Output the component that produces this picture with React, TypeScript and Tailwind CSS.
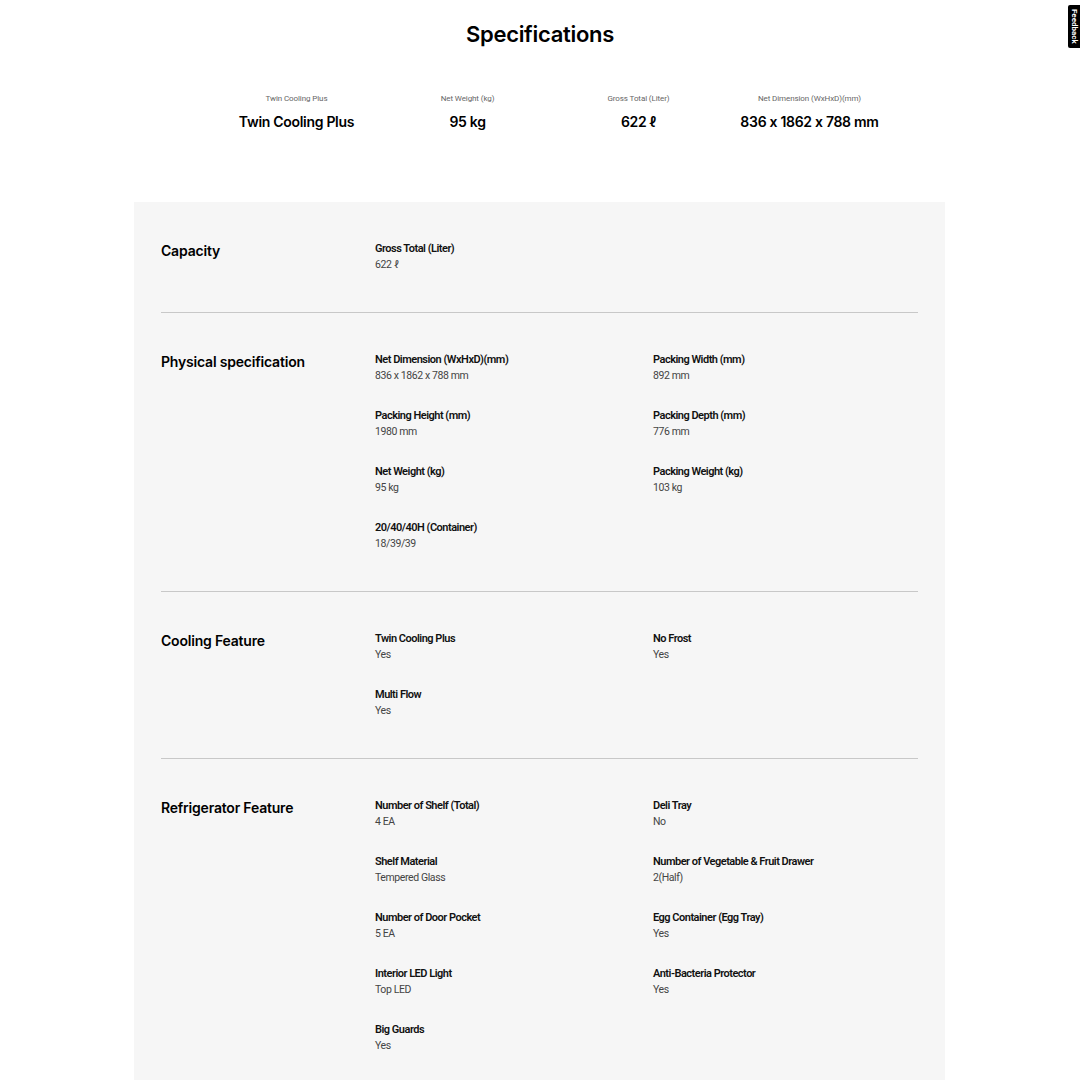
import React from 'react';

type Spec = { label: string; value: string };
type Section = { title: string; items: Spec[] };

const summary: Spec[] = [
  { label: 'Twin Cooling Plus', value: 'Twin Cooling Plus' },
  { label: 'Net Weight (kg)', value: '95 kg' },
  { label: 'Gross Total (Liter)', value: '622 ℓ' },
  { label: 'Net Dimension (WxHxD)(mm)', value: '836 x 1862 x 788 mm' },
];

const sections: Section[] = [
  {
    title: 'Capacity',
    items: [{ label: 'Gross Total (Liter)', value: '622 ℓ' }],
  },
  {
    title: 'Physical specification',
    items: [
      { label: 'Net Dimension (WxHxD)(mm)', value: '836 x 1862 x 788 mm' },
      { label: 'Packing Width (mm)', value: '892 mm' },
      { label: 'Packing Height (mm)', value: '1980 mm' },
      { label: 'Packing Depth (mm)', value: '776 mm' },
      { label: 'Net Weight (kg)', value: '95 kg' },
      { label: 'Packing Weight (kg)', value: '103 kg' },
      { label: '20/40/40H (Container)', value: '18/39/39' },
    ],
  },
  {
    title: 'Cooling Feature',
    items: [
      { label: 'Twin Cooling Plus', value: 'Yes' },
      { label: 'No Frost', value: 'Yes' },
      { label: 'Multi Flow', value: 'Yes' },
    ],
  },
  {
    title: 'Refrigerator Feature',
    items: [
      { label: 'Number of Shelf (Total)', value: '4 EA' },
      { label: 'Deli Tray', value: 'No' },
      { label: 'Shelf Material', value: 'Tempered Glass' },
      { label: 'Number of Vegetable & Fruit Drawer', value: '2(Half)' },
      { label: 'Number of Door Pocket', value: '5 EA' },
      { label: 'Egg Container (Egg Tray)', value: 'Yes' },
      { label: 'Interior LED Light', value: 'Top LED' },
      { label: 'Anti-Bacteria Protector', value: 'Yes' },
      { label: 'Big Guards', value: 'Yes' },
    ],
  },
];

const App: React.FC = () => {
  return (
    <div className="relative min-h-screen bg-white text-black font-['Roboto',sans-serif]">
      {/* Feedback tab */}
      <div className="absolute right-0 top-[5px] w-[12px] h-[43px] bg-black text-white flex items-center justify-center rounded-l-[2px]">
        <span className="[writing-mode:vertical-rl] text-[8px] font-bold leading-none">Feedback</span>
      </div>

      <h1 className="pt-[19px] text-center text-[22px] font-semibold tracking-[-0.3px] leading-[30px] font-['Inter',sans-serif]">
        Specifications
      </h1>

      {/* Summary */}
      <div className="ml-[211px] mt-[44px] w-[684px] grid grid-cols-4">
        {summary.map((s) => (
          <div key={s.label} className="flex flex-col items-center">
            <span className="text-[8px] leading-[12px] text-[#666] tracking-[-0.1px]">{s.label}</span>
            <span className="mt-[8px] text-[14px] leading-[18px] font-semibold font-['Inter',sans-serif] tracking-[-0.3px]">
              {s.value}
            </span>
          </div>
        ))}
      </div>

      {/* Spec panel */}
      <div className="ml-[134px] mt-[71px] w-[811px] bg-[#f6f6f6] px-[27px]">
        {sections.map((sec, i) => (
          <div
            key={sec.title}
            className={`flex py-[39px] ${i < sections.length - 1 ? 'border-b border-[#c8c8c8]' : ''}`}
          >
            <div className="w-[214px] shrink-0 pt-[1px]">
              <h2 className="text-[14px] leading-[18px] font-semibold font-['Inter',sans-serif] tracking-[-0.2px]">
                {sec.title}
              </h2>
            </div>
            <div className="flex-1 grid grid-cols-[278px_1fr] gap-y-[24px]">
              {sec.items.map((it) => (
                <div key={it.label} className="flex flex-col">
                  <span className="text-[11px] leading-[16px] font-semibold text-[#111] tracking-[-0.5px]">{it.label}</span>
                  <span className="text-[10.5px] leading-[16px] text-[#444] tracking-[-0.4px]">{it.value}</span>
                </div>
              ))}
            </div>
          </div>
        ))}
      </div>
    </div>
  );
};

export default App;
